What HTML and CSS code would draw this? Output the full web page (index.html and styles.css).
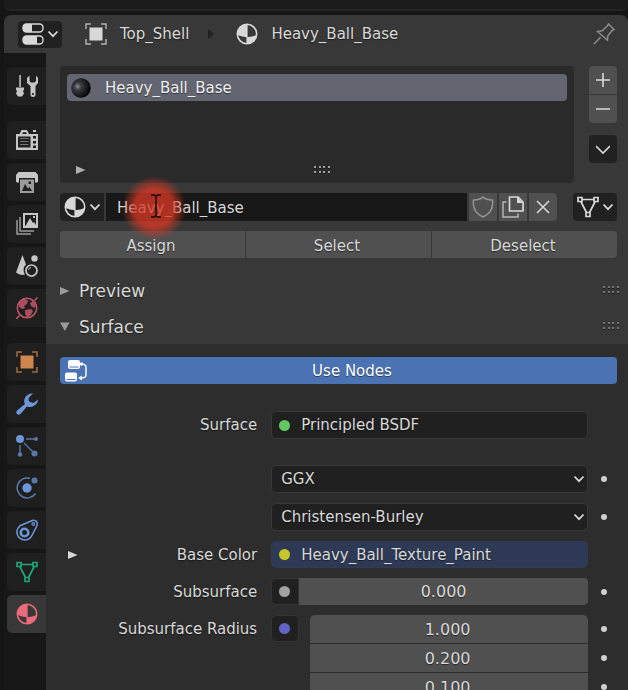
FILE: index.html
```html
<!DOCTYPE html>
<html lang="en">
<head>
<meta charset="utf-8">
<title>Material Properties</title>
<link rel="stylesheet" href="styles.css">
</head>
<body>
<svg class="defs" aria-hidden="true">
  <symbol id="material" viewBox="0 0 22 22">
    <circle cx="11" cy="11" r="9.7" fill="none" stroke="currentColor" stroke-width="1.6"/>
    <path fill="currentColor" d="M11 1A10 10 0 0 0 1.500 12Q6 14 11 14.200ZM11 14.200Q17 14 20.500 12A10 10 0 0 1 11 21Z"/>
    <path fill="none" stroke="currentColor" stroke-width="1.200" d="M11 11V21M11 1V11"/>
  </symbol>
  <symbol id="object" viewBox="0 0 22 22">
    <path fill="currentColor" d="M4.500 4.500h13v13h-13z"/>
    <path fill="none" stroke="currentColor" stroke-width="1.500" opacity=".75" d="M1 6V1H6M16 1h5V6M21 16v5H16M6 21H1V16"/>
  </symbol>
  <symbol id="mesh" viewBox="0 0 22 22">
    <path fill="none" stroke="currentColor" stroke-width="1.700" d="M1 1.500h4v4H1zM17 1.500h4v4h-4zM9 16.500h4v4H9zM5 3.500h12M3.800 5.500 9.500 16.500M18.200 5.500 12.500 16.500"/>
  </symbol>
  <symbol id="chevron" viewBox="0 0 12 8">
    <path fill="none" stroke="currentColor" stroke-width="1.800" d="M1.500 1.500 6 6.200 10.500 1.500"/>
  </symbol>
  <symbol id="right" viewBox="0 0 10 10"><path fill="currentColor" d="M0 1 9.500 5 0 9z"/></symbol>
  <symbol id="down" viewBox="0 0 10 10"><path fill="currentColor" d="M0 0.500H9.500L4.800 9z"/></symbol>
  <symbol id="grip" viewBox="0 0 18 10">
    <path class="grip-shade" d="M1 3h2v1H1zM6 3h2v1H6zM10 3h2v1h-2zM15 3h2v1h-2zM1 8h2v1H1zM6 8h2v1H6zM10 8h2v1h-2zM15 8h2v1h-2z"/>
    <path fill="currentColor" d="M1 1h2v2H1zM6 1h2v2H6zM10 1h2v2h-2zM15 1h2v2h-2zM1 6h2v2H1zM6 6h2v2H6zM10 6h2v2h-2zM15 6h2v2h-2z"/>
  </symbol>
</svg>

<div class="upper-area"></div>
<main class="editor">
  <header class="header">
    <button class="menu editor-type" aria-label="Editor type">
      <svg class="icon" viewBox="0 0 22 22"><g fill="none" stroke="currentColor" stroke-width="1.400"><rect x="1" y="1" width="20" height="8" rx="3.500"/><rect x="1" y="13" width="20" height="8" rx="3.500"/></g><path fill="currentColor" d="M4 1h6v8H4a3 3 0 0 1-3-3V4a3 3 0 0 1 3-3zM4 13h11v8H4a3 3 0 0 1-3-3v-2a3 3 0 0 1 3-3z"/></svg>
      <svg class="chevron"><use href="#chevron"/></svg>
    </button>
    <nav class="crumbs">
      <span class="crumb"><svg class="icon"><use href="#object"/></svg>Top_Shell</span>
      <svg class="crumb-arrow" viewBox="0 0 6 10"><path d="M0 0 6 5 0 10z"/></svg>
      <span class="crumb"><svg class="icon"><use href="#material"/></svg>Heavy_Ball_Base</span>
    </nav>
    <button class="pin" aria-label="Pin">
      <svg class="icon" viewBox="0 0 22 22"><path fill="none" stroke="currentColor" stroke-width="1.500" d="M.8 21.200 7.500 14.200M15.500 1 21 6.500 19 7.700 14.800 12.700 14.500 17.300 4.500 8.500 9.200 7.800 14.200 3z"/></svg>
    </button>
  </header>

  <div class="workspace">
    <nav class="tabs">
      <div class="tab-group">
        <button class="tab" aria-label="Tool"><svg class="icon" viewBox="0 0 22 22"><path fill="currentColor" d="M3.300 0h1.500v12H3.300zM0 12.500h8v2L7 16l1 2.500-2 3H2l-2-3L1 16l-1-1.500zM13.500.5 11 3v5l3.500 3v8.500a2.500 2.500 0 0 0 5 0V11L22 8V3L20 .5V6l-1.500 1.500h-3.500L13.500 6z"/><circle cx="17" cy="19" r="1.100" fill="#1f1f1f"/></svg></button>
      </div>
      <div class="tab-group">
        <button class="tab" aria-label="Render"><svg class="icon" viewBox="0 0 22 22"><path fill="currentColor" fill-rule="evenodd" d="M0 5h3.500l2-4h5.500l2 4h9v16H0zM7 3.200 6.300 5h4.400L10 3.200zM2 7.500v11h12.500v-11zM17 7v2.500h3V7zM17 12v2.500h3V12zM17 16.500V19h3v-2.500z"/><path fill="currentColor" d="M17 1h3v2h-3z"/><path stroke="currentColor" opacity=".5" d="M4 9.500h8.500M4 12.500h8.500M4 15.500h8.500"/></svg></button>
        <button class="tab" aria-label="Output"><svg class="icon" viewBox="0 0 22 22"><path fill="currentColor" d="M2.500 1h17L22 4v6q0 1.500-1.500 1.500H19V7H3v4.500H1.500Q0 11.500 0 10V4z"/><path fill="currentColor" opacity=".75" fill-rule="evenodd" d="M4 8.500h14V22H4zM6 20h10l-2.500-4-1.500 1.500L9 13zM12.500 10.500V13H15v-2.500z"/></svg></button>
        <button class="tab" aria-label="View Layer"><svg class="icon" viewBox="0 0 22 22"><path fill="currentColor" fill-rule="evenodd" d="M7 0h15v15H7zM9 2v11h.5L14 5l3 5 1-1 2 3V2zM17 3h2v2h-2z"/><path fill="none" stroke="currentColor" stroke-width="1.500" opacity=".75" d="M4 4v14h14M1 7v14h14"/></svg></button>
        <button class="tab" aria-label="Scene"><svg class="icon" viewBox="0 0 22 22"><path fill="currentColor" d="M6.500 0 10 9.500A7.500 7.500 0 0 0 9 19.500Q4 21 0 17.500z"/><circle cx="18.500" cy="3.500" r="3.200" fill="currentColor"/><circle cx="15.500" cy="15.500" r="5.500" fill="none" stroke="currentColor" stroke-width="1.700"/><path fill="none" stroke="currentColor" d="M12.500 15q.4-2.200 2.500-2.500"/></svg></button>
        <button class="tab world" aria-label="World"><svg class="icon" viewBox="0 0 22 22"><circle cx="11" cy="11" r="9.700" fill="none" stroke="currentColor" stroke-width="1.500"/><path fill="currentColor" opacity=".85" d="M3 6 8 2l4 1.500-1 3.500-3 2 1 2-2.500 1L3 10zM9 13l6-1 2 2-2 4-4 2.500-2-4zM14 6l3-2 3 5-2 2-3-2z"/><path stroke="currentColor" stroke-width="1.500" d="M0 22 3.500 18.500M18.500 3.500 21.500.5"/></svg></button>
      </div>
      <div class="tab-group">
        <button class="tab object" aria-label="Object"><svg class="icon"><use href="#object"/></svg></button>
        <button class="tab blue" aria-label="Modifiers"><svg class="icon" viewBox="0 0 22 22"><path fill="currentColor" d="M17 .5Q12 0 9.500 4T9 11L1 17.500Q-.5 19.500 1 21t3.500 0L11 13.500Q15 15 18.500 12.500T22 6.500L17.500 10 13 8.500 12.500 5z"/></svg></button>
        <button class="tab blue" aria-label="Particles"><svg class="icon" viewBox="0 0 22 22"><circle cx="4" cy="4" r="4" fill="currentColor"/><g fill="currentColor" opacity=".75"><circle cx="20" cy="4" r="2"/><circle cx="4" cy="19.500" r="2.200"/><circle cx="18.500" cy="18.500" r="3"/><path stroke="currentColor" stroke-width="1.400" d="M10 4h9M4 10v9M8 8l10 10"/></g></svg></button>
        <button class="tab blue" aria-label="Physics"><svg class="icon" viewBox="0 0 22 22"><circle cx="11" cy="11" r="4.700" fill="currentColor"/><circle cx="18.500" cy="3.500" r="3" fill="currentColor" opacity=".75"/><path fill="none" stroke="currentColor" stroke-width="1.500" opacity=".75" d="M14 1.300A10 10 0 1 0 19.500 16.500"/></svg></button>
        <button class="tab blue" aria-label="Constraints"><svg class="icon" viewBox="0 0 22 22"><circle cx="8.500" cy="13.500" r="3.800" fill="none" stroke="currentColor" stroke-width="2.600"/><path fill="none" stroke="currentColor" stroke-width="1.600" d="M17 1.200 4 6.800A8 8 0 0 0 3 18.500 8 8 0 0 0 14 19.200Q15.500 18 21 6.500 22 1 17 1.200z"/><circle cx="17.300" cy="5" r="1.300" fill="none" stroke="currentColor" stroke-width="1.200"/></svg></button>
        <button class="tab data" aria-label="Object Data"><svg class="icon"><use href="#mesh"/></svg></button>
        <button class="tab active" aria-label="Material"><svg class="icon"><use href="#material"/></svg></button>
      </div>
    </nav>

    <div class="properties">
      <section class="slots">
        <div class="slot-area">
          <div class="slot-list">
            <button class="slot">
              <svg class="icon" viewBox="0 0 22 22"><defs><radialGradient id="ball" cx=".33" cy=".42" r=".6"><stop offset="0" stop-color="#8d9094"/><stop offset=".3" stop-color="#3a3c40"/><stop offset="1" stop-color="#08090a"/></radialGradient></defs><circle cx="11" cy="11" r="9.800" fill="url(#ball)"/></svg>
              Heavy_Ball_Base
            </button>
            <div class="list-foot">
              <button class="plain" aria-label="Filter"><svg class="triangle"><use href="#right"/></svg></button>
              <svg class="grip"><use href="#grip"/></svg>
            </div>
          </div>
          <div class="slot-tools">
            <div class="stack">
              <button class="tool" aria-label="Add slot"><svg class="glyph" viewBox="0 0 14 14"><path d="M7 0v14M0 7h14"/></svg></button>
              <button class="tool" aria-label="Remove slot"><svg class="glyph" viewBox="0 0 14 14"><path d="M0 7h14"/></svg></button>
            </div>
            <button class="tool dark" aria-label="Slot specials"><svg class="glyph" viewBox="0 0 14 14"><path d="M0 4 7 11 14 4"/></svg></button>
          </div>
        </div>

        <div class="data-row">
          <div class="data-block">
            <button class="menu browse" aria-label="Browse material"><svg class="icon"><use href="#material"/></svg><svg class="chevron"><use href="#chevron"/></svg></button>
            <div class="name">
              <input class="name-input" type="text" value="Heavy_Ball_Base" aria-label="Material name">
              <span class="click-spot"></span>
              <svg class="ibeam" viewBox="0 0 12 24"><path d="M1 1h3.500L6 2.500 7.500 1H11M6 2v20M1 23h3.500L6 21.500 7.500 23H11"/></svg>
            </div>
            <button class="tool dim" aria-label="Fake user"><svg class="icon" viewBox="0 0 22 22"><path fill="none" stroke="currentColor" stroke-width="1.500" d="M11 1Q8 4 1.500 4 0 16 11 21 22 16 20.500 4 14 4 11 1z"/></svg></button>
            <button class="tool" aria-label="New material"><svg class="icon" viewBox="0 0 22 22"><path fill="none" stroke="currentColor" stroke-width="1.700" d="M7.500 1H16l5 5v9H7.500z"/><path fill="currentColor" d="M15 1v6h6z"/><path fill="none" stroke="currentColor" stroke-width="1.500" opacity=".75" d="M4.500 6H1v15h15v-3.500"/></svg></button>
            <button class="tool last" aria-label="Unlink"><svg class="glyph" viewBox="0 0 14 14"><path d="M1 1 13 13M13 1 1 13"/></svg></button>
          </div>
          <button class="menu link" aria-label="Link"><svg class="icon"><use href="#mesh"/></svg><svg class="chevron"><use href="#chevron"/></svg></button>
        </div>

        <div class="actions">
          <button>Assign</button><button>Select</button><button>Deselect</button>
        </div>
      </section>

      <h2 class="panel-head"><button><svg class="triangle"><use href="#right"/></svg>Preview</button><svg class="grip"><use href="#grip"/></svg></h2>
      <h2 class="panel-head"><button><svg class="triangle"><use href="#down"/></svg>Surface</button><svg class="grip"><use href="#grip"/></svg></h2>

      <section class="panel-body">
        <button class="use-nodes">
          <svg class="icon" viewBox="0 0 22 22"><path fill="currentColor" fill-rule="evenodd" d="M5 0h8q2 0 2 2v5q0 2-2 2H5Q3 9 3 7V2q0-2 2-2zM4.500 6.500v1h9v-1zM2 12.500h8q2 0 2 2v5q0 2-2 2H2q-2 0-2-2v-5q0-2 2-2zM1.500 19v1h9v-1z"/><path fill="none" stroke="currentColor" stroke-width="1.400" d="M15 4q6 0 6 3v8q0 3-5 3"/><circle cx="16.500" cy="4" r="1.700" fill="currentColor"/><path fill="currentColor" d="m13 18 4-2.500v5z"/></svg>
          <span>Use Nodes</span>
        </button>

        <div class="row shader">
          <label for="shader">Surface</label>
          <button id="shader" class="field"><i class="socket green"></i>Principled BSDF</button>
        </div>
        <div class="row">
          <span></span>
          <div class="choice"><select class="field" aria-label="Distribution"><option>GGX</option></select><svg class="chevron"><use href="#chevron"/></svg></div>
          <button class="key" aria-label="Animate"></button>
        </div>
        <div class="row">
          <span></span>
          <div class="choice"><select class="field" aria-label="Subsurface method"><option>Christensen-Burley</option></select><svg class="chevron"><use href="#chevron"/></svg></div>
          <button class="key" aria-label="Animate"></button>
        </div>
        <div class="row">
          <div class="expandable"><button class="plain" aria-label="Expand"><svg class="triangle"><use href="#right"/></svg></button><label for="base">Base Color</label></div>
          <button id="base" class="field short linked"><i class="socket yellow"></i>Heavy_Ball_Texture_Paint</button>
        </div>
        <div class="row">
          <label for="subsurface">Subsurface</label>
          <div class="joined"><button class="socket-button" aria-label="Subsurface input"><i class="socket grey"></i></button><input class="number" id="subsurface" value="0.000"></div>
          <button class="key" aria-label="Animate"></button>
        </div>
        <div class="row">
          <label for="radius">Subsurface Radius</label>
          <div class="vector">
            <button class="socket-button" aria-label="Radius input"><i class="socket violet"></i></button>
            <div class="vector-values"><input class="number" id="radius" value="1.000"><input class="number" aria-label="Radius Y" value="0.200"><input class="number" aria-label="Radius Z" value="0.100"></div>
          </div>
          <div class="keys"><button class="key" aria-label="Animate X"></button><button class="key" aria-label="Animate Y"></button><button class="key" aria-label="Animate Z"></button></div>
        </div>
      </section>
    </div>
  </div>
</main>
</body>
</html>
```
FILE: styles.css
```css
* { box-sizing: border-box; }

body {
  margin: 0;
  height: 100vh;
  overflow: hidden;
  display: flex;
  flex-direction: column;
  background: #151515;
  color: #d8d8d8;
  font: 15px/20px "DejaVu Sans", sans-serif;
  text-shadow: 0 1px 1px rgba(0, 0, 0, .5);
}

button, input, select {
  margin: 0;
  padding: 0;
  border: 0;
  background: none;
  color: inherit;
  font: inherit;
  text-shadow: inherit;
}

svg { display: block; flex: none; }
.defs { position: absolute; width: 0; height: 0; }
.icon { width: 22px; height: 22px; }
.chevron { width: 12px; height: 8px; }
.triangle { width: 10px; height: 10px; }
.grip { width: 18px; height: 10px; color: #757575; }
.grip-shade { fill: #1c1c1c; }
.glyph { width: 14px; height: 14px; fill: none; stroke: currentColor; stroke-width: 1.6; }
.plain { display: flex; }

.upper-area {
  flex: none;
  height: 11px;
  margin: 0 0 4px 4px;
  background: #1c1c1c;
  border-bottom: 2px solid #242424;
  border-radius: 0 0 6px 6px;
}

.editor {
  flex: 1;
  min-height: 0;
  display: flex;
  flex-direction: column;
  margin-left: 4px;
  overflow: hidden;
  border-radius: 7px 7px 0 0;
  background: #383838;
}

.header {
  flex: none;
  height: 38px;
  display: flex;
  align-items: center;
  padding: 0 13px 0 14px;
}

.menu {
  flex: none;
  width: 44px;
  height: 27px;
  display: flex;
  align-items: center;
  justify-content: center;
  gap: 3px;
  border-radius: 4px;
  background: #212121;
}

.crumbs { flex: 1; display: flex; align-items: center; margin-left: 23px; }
.crumb { display: flex; align-items: center; gap: 13px; }
.crumb-arrow { width: 6px; height: 10px; margin: 0 22px 0 19px; fill: #222; }
.pin { color: #8c8c8c; }

.workspace { flex: 1; min-height: 0; display: flex; }

.tabs {
  flex: none;
  width: 42px;
  padding: 14px 0 0 3px;
  display: flex;
  flex-direction: column;
  gap: 16px;
  background: #171717;
}
.tab-group { display: flex; flex-direction: column; gap: 4px; }
.tab {
  height: 38px;
  display: flex;
  align-items: center;
  justify-content: center;
  border-radius: 5px 0 0 5px;
  background: #1f1f1f;
  color: #c6c6c6;
}
.world { color: #c4566a; }
.object { color: #cf864b; }
.blue { color: #6d95d8; }
.data { color: #20a677; }
.active { background: #383838; color: #ea6b7c; }

.properties { flex: 1; min-width: 0; }
.slots { padding: 13px 11px 14px 14px; }

.slot-area { display: flex; gap: 15px; }
.slot-list {
  flex: 1;
  height: 117px;
  padding: 8px 7px;
  display: flex;
  flex-direction: column;
  justify-content: space-between;
  border-radius: 4px;
  background: #2a2a2a;
}
.slot {
  height: 27px;
  display: flex;
  align-items: center;
  gap: 13px;
  padding: 0 3px;
  border-radius: 4px;
  background: #636570;
  color: #eee;
}
.list-foot {
  display: grid;
  grid-template-columns: 1fr auto 1fr;
  align-items: center;
  padding: 0 0 0 9px;
  color: #b0b0b0;
}
.list-foot .grip { color: #a0a0a0; }

.slot-tools { display: flex; flex-direction: column; gap: 12px; }
.stack { display: flex; flex-direction: column; gap: 1px; border-radius: 4px; overflow: hidden; }
.tool {
  width: 28px;
  height: 28px;
  flex: none;
  display: flex;
  align-items: center;
  justify-content: center;
  background: #505050;
}
.dark { border-radius: 4px; background: #212121; }
.dim { color: #949494; }

.data-row { display: flex; gap: 16px; margin-top: 10px; }
.data-block { flex: 1; min-width: 0; height: 28px; display: flex; gap: 2px; }
.data-row .menu { height: 28px; }
.data-row .browse { border-radius: 4px 0 0 4px; }
.last { border-radius: 0 4px 4px 0; }
.name { flex: 1; min-width: 0; position: relative; background: #181818; }
.name-input { display: block; width: 100%; height: 28px; padding: 2px 11px 0; }
.click-spot {
  position: absolute;
  left: 16px;
  top: -17px;
  width: 64px;
  height: 64px;
  border-radius: 50%;
  background: radial-gradient(closest-side, rgba(214, 56, 36, .78) 60%, rgba(214, 56, 36, 0));
  pointer-events: none;
}
.ibeam {
  position: absolute;
  left: 44px;
  top: 1px;
  width: 12px;
  height: 24px;
  fill: none;
  stroke: #1c0b08;
  stroke-width: 1.5;
  pointer-events: none;
}

.actions {
  display: grid;
  grid-template-columns: repeat(3, 1fr);
  gap: 1px;
  margin-top: 10px;
  border-radius: 4px;
  overflow: hidden;
}
.actions button { height: 27px; padding: 2px 3px 0 0; background: #505050; }

.panel-head {
  height: 36px;
  margin: 0;
  padding: 2px 8px 0 14px;
  display: flex;
  align-items: center;
  justify-content: space-between;
  font-size: 17px;
  font-weight: normal;
}
.panel-head button { display: flex; align-items: center; gap: 9px; }
.panel-head .triangle { color: #9a9a9a; }
.panel-head .grip { margin-bottom: 3px; }

.panel-body {
  display: flex;
  flex-direction: column;
  gap: 10px;
  padding: 13px 11px 0 14px;
  background: #2d2d2d;
}
.use-nodes {
  height: 27px;
  display: flex;
  align-items: center;
  padding: 0 0 0 5px;
  border-radius: 4px;
  background: #4b73b3;
  color: #fff;
}
.use-nodes span { flex: 1; padding-top: 1px; }

.row {
  display: grid;
  grid-template-columns: 2fr 3fr 29px;
  align-items: start;
}
.row label { padding: 2px 14px 0 0; line-height: 25px; text-align: right; }
.shader { margin: 17px 0 16px; }
.field {
  width: 100%;
  height: 28px;
  display: flex;
  align-items: center;
  gap: 11px;
  padding: 0 7px;
  border: 1px solid #383838;
  border-radius: 5px;
  background: #202020;
  appearance: none;
}
select.field { padding: 0 9px; }
.short { height: 27px; }
.linked { border-color: #303b55; background: #2e3a55; }
.choice { display: grid; align-items: center; }
.choice > * { grid-area: 1 / 1; }
.choice .chevron { justify-self: end; margin-right: 3px; pointer-events: none; }

.expandable { display: flex; align-items: center; justify-content: space-between; padding-left: 8px; }

.socket { flex: none; width: 11px; height: 11px; border-radius: 50%; }
.green { background: #63c763; }
.yellow { background: #c7c729; }
.grey { background: #a1a1a1; }
.violet { background: #6363c7; }
.socket-button {
  flex: none;
  width: 28px;
  height: 27px;
  display: flex;
  align-items: center;
  padding-left: 7px;
  border: 1px solid #343434;
  border-radius: 5px;
  background: #202020;
}
.joined { display: flex; }
.joined .socket-button { border-radius: 5px 0 0 5px; }
.number {
  flex: 1;
  min-width: 0;
  height: 27px;
  border-radius: 0 4px 4px 0;
  background: #505050;
  font-size: 16px;
  text-align: center;
}
.vector { display: flex; gap: 11px; }
.vector-values {
  flex: 1;
  min-width: 0;
  display: flex;
  flex-direction: column;
  gap: 1px;
  border-radius: 5px;
  overflow: hidden;
}
.vector-values .number { flex: none; height: 28px; padding-right: 3px; border-radius: 0; }
.keys { display: grid; gap: 2px; }
.key { width: 29px; height: 27px; display: flex; align-items: center; justify-content: center; padding-left: 3px; }
.key::before { content: ""; width: 6px; height: 6px; border-radius: 50%; background: #d0d0d0; }
```
